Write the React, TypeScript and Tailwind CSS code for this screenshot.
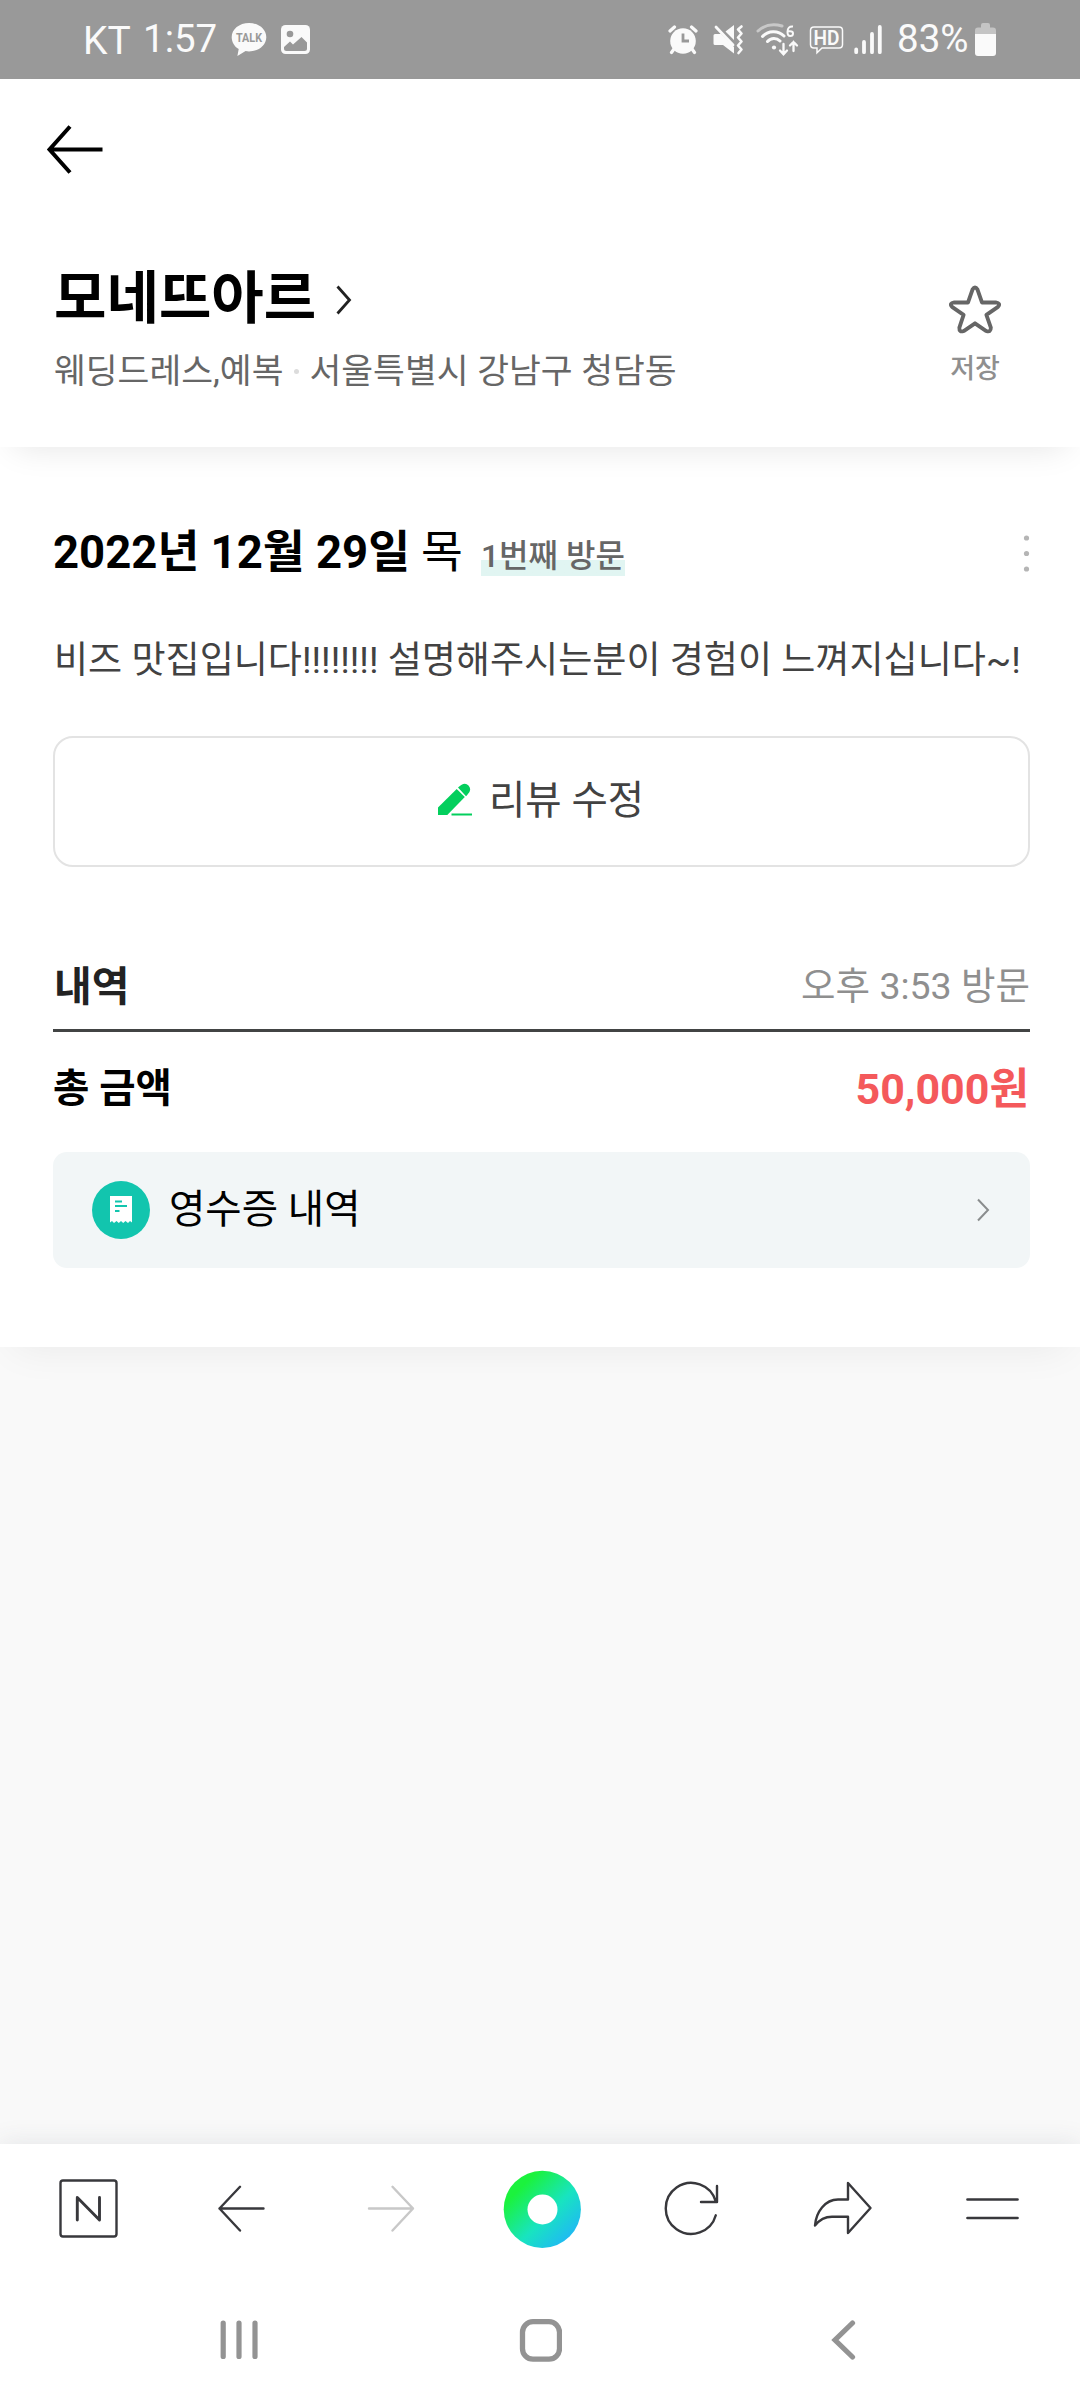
import type { ReactNode } from "react";

const FONT = "font-[Roboto,'Noto_Sans_CJK_KR',sans-serif]";

function StatusBar() {
  return (
    <div className="flex h-[79px] shrink-0 items-start bg-[#999999] pl-[83px] pr-[84px] text-[#fafafa]">
      <span className="mt-[21px] w-[60px] text-[39px] leading-[40px]">KT</span>
      <span className="mt-[19px] w-[88px] text-[38.5px] leading-[40px] whitespace-nowrap">1:57</span>
      <svg className="mt-[22px]" width="36" height="35" viewBox="0 0 36 35">
        <path
          d="M18 1C8.300 1 .7 7.200 .7 15.200c0 5 2.800 9.300 7 11.900L6.400 34l8.200-4.900c1.100.2 2.300.3 3.400.3 9.700 0 17.300-6.300 17.300-14.200S27.700 1 18 1Z"
          fill="#fafafa"
        />
        <text x="18" y="20.300" textAnchor="middle" fontSize="12" fontWeight="700" fill="#999999" textLength="26" lengthAdjust="spacingAndGlyphs">
          TALK
        </text>
      </svg>
      <svg className="mt-[25px] ml-[14px]" width="29" height="29" viewBox="0 0 29 29">
        <rect width="29" height="29" rx="4.500" fill="#fafafa" />
        <circle cx="9" cy="9" r="3.300" fill="#999999" />
        <path d="M3 22 9 16.500 12 19.500 20.500 12 26 17.500V23.500Q26 26 23.500 26H5.500Q3 26 3 23.500Z" fill="#999999" />
      </svg>

      <div className="ml-auto flex items-start">
        {/* alarm */}
        <svg className="mt-[24px]" width="30" height="31" viewBox="0 0 30 31">
          <circle cx="15" cy="17" r="12.800" fill="#fafafa" />
          <path d="M2 7 6.500 3M28 7 23.500 3M6 25 3.500 28.500M24 25 26.500 28.500" stroke="#fafafa" strokeWidth="3.200" strokeLinecap="round" />
          <path d="M15 9.500V17h6" fill="none" stroke="#999999" strokeWidth="2.800" />
        </svg>
        {/* muted speaker */}
        <svg className="ml-[15px] mt-[24px]" width="31" height="32" viewBox="0 0 31 32">
          <path d="M.5 11.500Q.5 10 2 10H8L21 23V29.500L10 21H2Q.5 21 .5 19.500ZM12.500 7.500 21 1V16Z" fill="#fafafa" />
          <path d="M3 3 20 21" stroke="#fafafa" strokeWidth="2.800" strokeLinecap="round" />
          <path d="M28.500 2.500 25 5.500 28.500 9.500 25 13.500 28.500 17.500 25 21.500 28.500 25.500 25.500 29" fill="none" stroke="#fafafa" strokeWidth="2.600" strokeLinecap="round" strokeLinejoin="round" />
        </svg>
        {/* wifi 6 */}
        <svg className="ml-[12px] mt-[22px]" width="43" height="35" viewBox="0 0 43 35">
          <g fill="none" strokeWidth="3" strokeLinecap="round">
            <path d="M2 9C8 3.500 17 1.500 26 4" stroke="#c8c8c8" />
            <path d="M6.500 14.500C12 8.500 22 8 28 14M11.500 19.500C15 15.500 20.500 15.500 24 19" stroke="#fafafa" />
          </g>
          <circle cx="18" cy="25.500" r="2.100" fill="#fafafa" />
          <path d="M37 4.500Q31.500 4 31.500 10Q31.500 14 34.200 14Q37 14 37 11.500Q37 9.300 34 9.300H32" fill="none" stroke="#fafafa" strokeWidth="2" />
          <path d="M27.500 22V32M24 28.500 27.500 32.300 31 28.500M37.500 29V20M34 23.500 37.500 20 41 23.500" fill="none" stroke="#fafafa" strokeWidth="2.300" strokeLinecap="round" />
        </svg>
        <svg className="ml-[10px] mt-[25px]" width="35" height="30" viewBox="0 0 35 30">
          <path d="M5 2H30Q33.500 2 33.500 5.500V19.500Q33.500 23 30 23H13L8 27.800V23H5Q1.500 23 1.500 19.500V5.500Q1.500 2 5 2Z" fill="none" stroke="#fafafa" strokeWidth="1.500" />
          <text x="17.500" y="19.500" textAnchor="middle" fontSize="19.500" fontWeight="600" fill="#fafafa" textLength="26" lengthAdjust="spacingAndGlyphs">
            HD
          </text>
        </svg>
        <svg className="ml-[10px] mt-[24px]" width="28" height="31" viewBox="0 0 28 31">
          <path d="M2.200 25.500V28.200M10 18V28.200M18 10V28.200M25.800 3V28.200" stroke="#fafafa" strokeWidth="3.800" strokeLinecap="round" />
        </svg>
        <span className="ml-[15px] mt-[19px] w-[78px] text-[38.5px] leading-[40px] whitespace-nowrap">83%</span>
        <svg className="mt-[22px]" width="21" height="34" viewBox="0 0 21 34">
          <path d="M6 3Q6 1 8 1H13Q15 1 15 3V5.500H18Q21 5.500 21 8.500V12H0V8.500Q0 5.500 3 5.500H6Z" fill="#c4c4c4" />
          <path d="M0 12H21V31Q21 34 18 34H3Q0 34 0 31Z" fill="#fafafa" />
        </svg>
      </div>
    </div>
  );
}

function PlaceHeader() {
  return (
    <header className="relative z-10 flex h-[368px] shrink-0 flex-col bg-white shadow-[0_14px_32px_-14px_rgba(0,0,0,0.11)]">
      <svg className="mt-[45px] ml-[46px] shrink-0" width="58" height="51" viewBox="0 0 58 51" fill="none" stroke="#000" strokeWidth="4">
        <path d="M3.500 25.500H56.500M24 2.500 3.500 25.500 24 48.500" />
      </svg>
      <div className="mt-[79px] flex justify-between pl-[54px] pr-[76px]">
        <div>
          <div className="flex h-[90px] items-start">
            <h1 className="text-[57px] font-bold leading-[90px] text-black whitespace-nowrap">모네뜨아르</h1>
            <svg className="ml-[19px] mt-[31px]" width="18" height="30" viewBox="0 0 18 30" fill="none" stroke="#222" strokeWidth="2.800">
              <path d="M2.500 1.500 14.500 15 2.500 28.500" />
            </svg>
          </div>
          <p className="mt-[2px] flex items-center text-[34.6px] leading-[50px] text-[#666] whitespace-nowrap">
            웨딩드레스,예복
            <span className="mr-[11px] ml-[10px] h-[5px] w-[5px] rounded-full bg-[#dcdcdc]" />
            서울특별시 강남구 청담동
          </p>
        </div>
        <button className="mt-[30px] flex w-[58px] flex-col items-center">
          <svg width="56" height="51" viewBox="0 0 58 52" fill="none" stroke="#666" strokeWidth="4" strokeLinejoin="round">
            <path d="M26.400 5.300Q29 .9 31.600 5.300L36.200 18.700H50.500Q56 19.500 52.800 23.200L40.800 31.600 45.400 44.800Q45.500 50 40.700 48.300L29 40.300 17.300 48.300Q12.500 50 12.800 44.800L17.200 31.600 5.200 23.200Q2 19.500 7.500 18.700H21.800Z" />
          </svg>
          <span className="mt-[14px] text-[27px] font-medium leading-[40px] text-[#8f8f8f] whitespace-nowrap">저장</span>
        </button>
      </div>
    </header>
  );
}

function VisitCard() {
  return (
    <main className="flex h-[900px] shrink-0 flex-col bg-white pr-[50px] pl-[53px] shadow-[0_14px_40px_-14px_rgba(0,0,0,0.07)]">
      <div className="mt-[74px] flex h-[64px] items-center text-[45.500px] text-black whitespace-nowrap">
        <strong className="font-bold">2022년 12월 29일</strong>
        <span className="ml-[11px]">목</span>
        <span className="ml-[18px] mt-[6px] bg-linear-to-b from-transparent from-58% to-[#e1f5f2] to-58% text-[32px] font-medium leading-[39px] text-[#666]">
          1번째 방문
        </span>
        <svg className="ml-auto" width="8" height="38" viewBox="0 0 8 38" fill="#b5b5b5">
          <circle cx="4.500" cy="4" r="2.600" />
          <circle cx="4.500" cy="19.500" r="2.600" />
          <circle cx="4.500" cy="35" r="2.600" />
        </svg>
      </div>
      <p className="mt-[46px] ml-px text-[37.1px] leading-[60px] text-[#424242] whitespace-nowrap">
        비즈 맛집입니다!!!!!!!! 설명해주시는분이 경험이 느껴지십니다~!
      </p>
      <button className="mt-[45px] flex h-[131px] items-center justify-center rounded-[20px] border-2 border-[#e3e3e3] pr-[2px] pb-[2px] text-[39.500px] text-[#424242]">
        <svg className="mr-[16px] -mt-[2px]" width="36" height="36" viewBox="0 0 36 36" fill="#03cf5d">
          <path d="M1 25.500 19.700 7 27.800 15 10.300 33H1Z" />
          <path d="M21 5.500Q27.500-1 31.500 3.500T30 13.200L29 14.200Z" />
          <path d="M14.500 31.500H35V33.500H14.500Z" />
        </svg>
        리뷰 수정
      </button>

      <div className="mt-[85px] flex h-[80px] items-start justify-between border-b-3 border-[#424444] whitespace-nowrap">
        <h2 className="ml-px text-[41px] font-bold leading-[70px] text-[#222]">내역</h2>
        <span className="text-[37.500px] leading-[69px] text-[#8f8f8f]">오후 3:53 방문</span>
      </div>
      <div className="mt-[21px] flex h-[72px] items-center justify-between whitespace-nowrap">
        <strong className="text-[39.500px] font-bold leading-[68px] text-black">총 금액</strong>
        <strong className="mr-px text-[43px] font-bold text-[#f4595b]">50,000원</strong>
      </div>
      <button className="mt-[27px] flex h-[116px] items-center rounded-[14px] bg-[#f2f6f7] pr-[40px] pl-[39px] text-[39.500px] text-black">
        <svg className="mr-[19px]" width="58" height="58" viewBox="0 0 58 58">
          <circle cx="29" cy="29" r="29" fill="#12c5ae" />
          <path d="M18 15H40V41.500L38 40 36 42 33.500 40 31.200 42 29 40 26.800 42 24.500 40 22 42 20 40 18 41.500Z" fill="#fff" />
          <path d="M23 20.500H30M23 25H35M23 30H27.500" stroke="#12c5ae" strokeWidth="2" />
        </svg>
        영수증 내역
        <svg className="ml-auto" width="14" height="24" viewBox="0 0 14 24" fill="none" stroke="#8a8d8e" strokeWidth="2">
          <path d="M2 1.500 12 12 2 22.500" />
        </svg>
      </button>
    </main>
  );
}

function BarItem({ children, color = "#38383c" }: { children: ReactNode; color?: string }) {
  return (
    <button className="flex flex-1 justify-center">
      <svg width="80" height="80" viewBox="0 0 80 80" fill="none" stroke={color} strokeWidth="2.400" strokeLinecap="round" strokeLinejoin="round">
        {children}
      </svg>
    </button>
  );
}

function BrowserBar() {
  return (
    <nav className="flex h-[130px] shrink-0 bg-white pt-[25px] pr-[11px] pl-[15px] shadow-[0_-2px_24px_rgba(60,70,90,0.1)]">
      <BarItem>
        <rect x="10.500" y="11.500" width="56" height="56" rx="2.500" />
        <path d="M27.300 51V28.500L49.500 51V28.500" strokeWidth="2.900" />
      </BarItem>
      <BarItem>
        <path d="M62.500 39.500H18.500M39 17.800 18.500 39.500 39 61.500" />
      </BarItem>
      <BarItem color="#c8c8c8">
        <path d="M18 39.500H62M41.500 17.800 62 39.500 41.500 61.500" />
      </BarItem>
      <BarItem>
        <defs>
          <linearGradient id="green-dot" x1="0.150" y1="0.150" x2="0.850" y2="0.850">
            <stop offset="0.100" stopColor="#1bf23d" />
            <stop offset="0.600" stopColor="#18e4c0" />
            <stop offset="1" stopColor="#1fbcf0" />
          </linearGradient>
        </defs>
        <circle cx="40.300" cy="40.300" r="38.600" fill="url(#green-dot)" stroke="none" />
        <circle cx="40.500" cy="40.500" r="15" fill="#fff" stroke="none" />
      </BarItem>
      <BarItem>
        <path d="M64 17V33H48M62.800 46.300A25.500 25.500 0 1 1 62.800 32.500" />
      </BarItem>
      <BarItem>
        <path d="M45 14V30.500H35C22 30.500 13 43 12 56.500C17 50 22 47.700 29 47.700H45V64L67.500 39Z" />
      </BarItem>
      <BarItem>
        <path d="M13.500 30.500H63.500M13.500 49H63.500" strokeWidth="2.700" />
      </BarItem>
    </nav>
  );
}

function SystemNav() {
  return (
    <div className="relative flex h-[126px] shrink-0 items-start bg-white pt-[44px] pl-[219px]">
      <svg width="40" height="44" viewBox="0 0 40 44" stroke="#939393" strokeWidth="5.200" strokeLinecap="round">
        <path d="M4.200 5V38.500M20 5V38.500M36 5V38.500" />
      </svg>
      <svg className="ml-[259px]" width="44" height="44" viewBox="0 0 44 44" fill="none" stroke="#939393" strokeWidth="5.300">
        <rect x="4.500" y="3.700" width="37" height="37.500" rx="10.500" />
      </svg>
      <svg className="ml-[268px]" width="26" height="44" viewBox="0 0 26 44" fill="none" stroke="#939393" strokeWidth="5.200" strokeLinecap="round">
        <path d="M22.500 5 5 22 22.500 39" />
      </svg>
    </div>
  );
}

export default function App() {
  return (
    <div className={`flex h-[2400px] w-[1080px] flex-col overflow-hidden bg-[#f9f9f9] ${FONT}`}>
      <StatusBar />
      <PlaceHeader />
      <VisitCard />
      <div className="flex-1" />
      <BrowserBar />
      <SystemNav />
    </div>
  );
}
